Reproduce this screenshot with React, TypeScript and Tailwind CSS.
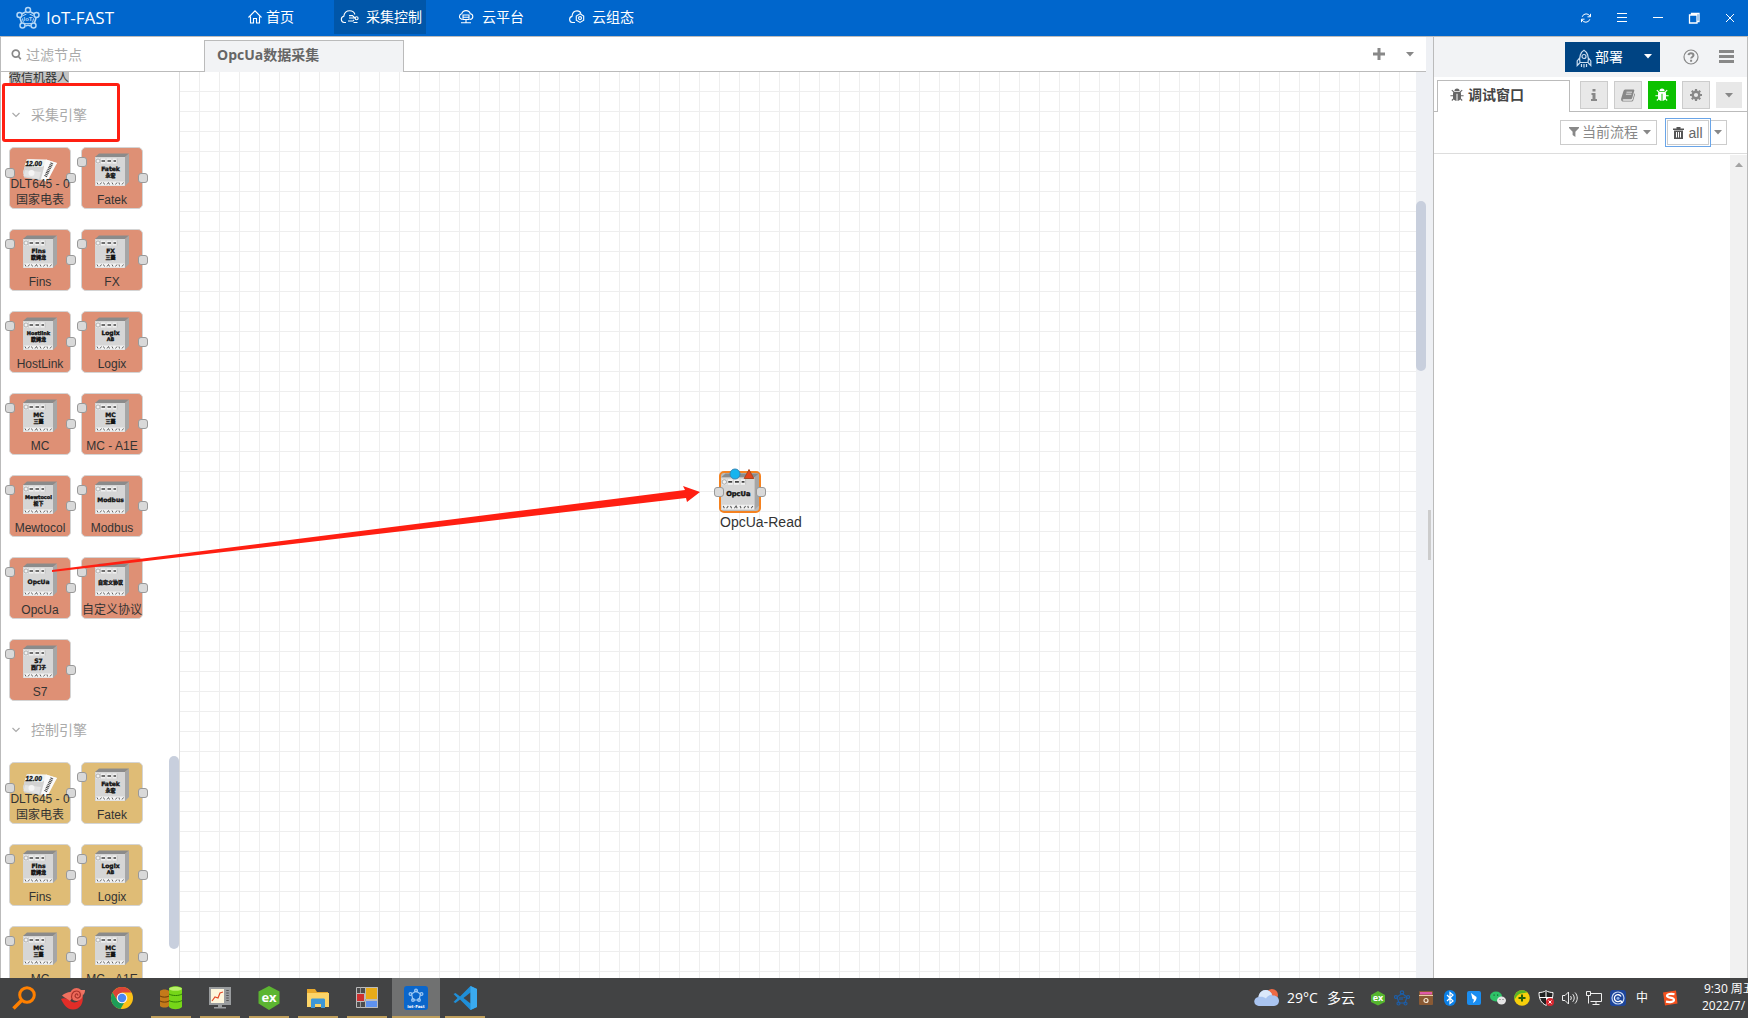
import React from 'react'

const FONT = "font-['Liberation_Sans','Noto_Sans_CJK_SC',sans-serif]"
const UI_FONT = "font-['Open_Sans','Noto_Sans_CJK_SC',sans-serif]"

type IconProps = { className?: string }

/* ---------- small glyphs ---------- */

function Caret({ className = '' }: IconProps) {
  return (
    <svg viewBox="0 0 8 5" className={`h-[5px] w-2 shrink-0 ${className}`} fill="currentColor" aria-hidden="true">
      <path d="M0 0h8L4 4.6z" />
    </svg>
  )
}

function Logo({ className = '' }: IconProps) {
  const knobs = [
    [12, 4],
    [20.5, 9],
    [17.5, 19.5],
    [6.5, 19.5],
    [3.5, 9],
  ]
  return (
    <svg viewBox="0 0 24 24" className={className} fill="none" stroke="currentColor" aria-hidden="true">
      <path strokeWidth="1.6" d="M9.6 6 5.8 7.8M14.4 6l3.8 1.8M20 12l-1.6 5M4 12l1.6 5M9.5 20c1.5-.9 3.5-.9 5 0" />
      <path strokeWidth="1" d="M10.4 8.2 7 9.6M13.6 8.2 17 9.6M17.6 12.4l-1 3.8M6.4 12.4l1 3.8M9 17.6h6" />
      {knobs.map(([x, y]) => (
        <circle key={`${x}-${y}`} cx={x} cy={y} r="2.5" strokeWidth="1.5" />
      ))}
      <text x="12" y="15" textAnchor="middle" fontSize="6" fontWeight="700" fill="currentColor" stroke="none" fontFamily="Liberation Sans">
        IoT
      </text>
    </svg>
  )
}

function HomeIcon() {
  return (
    <svg viewBox="0 0 14 16" className="h-4 w-[14px]" fill="none" stroke="currentColor" strokeWidth="1.1" aria-hidden="true">
      <path d="M.5 8.500 7 1.800l6.500 6.700M2.500 7.500v6.500h3V9.500h3V14h3V7.500" />
    </svg>
  )
}

function CloudFlowIcon() {
  return (
    <svg viewBox="0 0 20 16" className="h-4 w-5" fill="none" stroke="currentColor" strokeWidth="1.1" aria-hidden="true">
      <path d="M6 13.500H4.200a3.200 3.200 0 0 1-.4-6.300C4.300 4 6.800 1.800 9.700 1.800c2.600 0 4.500 1.500 5.200 3.700" />
      <path d="M9 6.600h3.500L15 9H9M8 12h5l1-1.200M13.500 13.500h4" />
      <circle cx="16.600" cy="9.300" r="1.500" />
    </svg>
  )
}

function CloudServerIcon() {
  return (
    <svg viewBox="0 0 18 16" className="h-4 w-[18px]" fill="none" stroke="currentColor" strokeWidth="1.1" aria-hidden="true">
      <path d="M4.500 10.500C2.600 10.300 1.300 9 1.500 7.300 1.600 5.800 2.500 5 3.700 4.800 4.300 2.800 6 1.600 8 1.600s3.800 1.200 4.300 3.200c1.500.2 2.500 1.200 2.500 2.700 0 1.600-1.200 2.900-3 3" />
      <path d="M5 6h6v4.500H5zM5 8.200h6M8 10.500v3M3 13.700h10" />
    </svg>
  )
}

function CloudGearIcon() {
  return (
    <svg viewBox="0 0 18 16" className="h-4 w-[18px]" fill="none" stroke="currentColor" strokeWidth="1.1" aria-hidden="true">
      <path d="M7 13.500H4.400a3.100 3.100 0 0 1-.4-6.100C4.300 4 6.500 1.900 9 1.900c2 0 3.400 1 4 2.700" />
      <path d="m12 4.800 3.700 2.200v4.200L12 13.400l-3.700-2.200V7z" />
      <circle cx="12" cy="9.100" r="1.500" />
    </svg>
  )
}

function BugIcon({ className = '' }: IconProps) {
  return (
    <svg viewBox="0 0 14 14" className={`h-[14px] w-[14px] shrink-0 ${className}`} fill="currentColor" aria-hidden="true">
      <path d="M4.400 3.200a2.600 2.600 0 0 1 5.200 0z" />
      <path d="M3.500 4h7c.4.6.5 1.300.5 2v3.500c0 1.700-1.400 3.300-3.500 3.500V5.800h-1V13C4.400 12.800 3 11.200 3 9.500V6c0-.7.1-1.400.5-2z" />
      <path d="M1.800 2.200 4.500 4.600M12.200 2.200 9.500 4.600M.4 7.700h3M10.600 7.700h3M1.800 12.500l2.400-2.300M12.200 12.500l-2.400-2.300" stroke="currentColor" strokeWidth="1.100" />
    </svg>
  )
}

function BookIcon() {
  return (
    <svg viewBox="0 0 14 14" className="h-[14px] w-[14px]" aria-hidden="true">
      <path fill="currentColor" d="M4.600 1.500h7.600c.9 0 1.300.7 1 1.500l-2 7c-.2.800-.9 1.300-1.700 1.300H2.600c-.8 0-1.200.5-1 1 .2.300.6.400 1 .4h7.600c.7 0 1.200-.4 1.400-1l1.900-6.500c.5.400.6.900.4 1.600l-1.700 5.600c-.2.700-.9 1.200-1.700 1.200H2.300C.8 13.600-.3 12 .2 10.500l2.200-7.300C2.700 2.200 3.600 1.500 4.600 1.500z" />
      <path stroke="#e8e8e8" strokeWidth=".9" d="M5.500 4.200h5.500M4.900 6.200h5.500" />
    </svg>
  )
}

function GearIcon() {
  return (
    <svg viewBox="0 0 14 14" className="h-[14px] w-[14px]" fill="none" stroke="currentColor" aria-hidden="true">
      <circle cx="7" cy="7" r="3.300" strokeWidth="2.400" />
      <path strokeWidth="2.200" d="M7 1v2M7 11v2M1 7h2M11 7h2M2.800 2.800l1.300 1.300M9.900 9.900l1.300 1.300M11.200 2.800 9.900 4.100M4.100 9.900l-1.300 1.300" />
    </svg>
  )
}

/* ---------- header ---------- */

const navItems = [
  { label: '首页', Icon: HomeIcon, cls: 'gap-1 pl-3 pr-1' },
  { label: '采集控制', Icon: CloudFlowIcon, cls: 'ml-9 gap-1.5 bg-[#0056a9] pl-1.5 pr-1' },
  { label: '云平台', Icon: CloudServerIcon, cls: 'ml-6 gap-1.5 pl-2 pr-1' },
  { label: '云组态', Icon: CloudGearIcon, cls: 'ml-8 gap-1.5 pl-2 pr-1' },
]

const windowIcons: { label: string; icon: React.ReactNode }[] = [
  { label: '刷新', icon: <path d="M2.200 4.800a4.200 4.200 0 0 1 7.900-.3M9.800 7.300a4.200 4.200 0 0 1-7.900.3M10.500 1.800v3h-3M1.500 10.200v-3h3" /> },
  { label: '菜单', icon: <path d="M1 1.500h10M1 5.500h10M1 9.500h10" /> },
  { label: '最小化', icon: <path d="M1 5.500h10" /> },
  { label: '还原', icon: <path d="M1.500 3h7.500v8H1.500zM3.500 3V1.500H11V9.500H9" strokeWidth="1.300" /> },
  { label: '关闭', icon: <path d="m2 2 8 8M10 2l-8 8" /> },
]

function Header() {
  return (
    <header className={`flex h-9 shrink-0 items-start bg-[#0066cc] text-white ${UI_FONT}`}>
      <div className="flex h-9 w-[236px] shrink-0 items-center gap-1.5 pl-4">
        <Logo className="h-6 w-6 text-[#b5d8f7]" />
        <span className="text-[17px] leading-6">IoT-FAST</span>
      </div>
      <nav className="flex h-[34px]">
        {navItems.map(({ label, Icon, cls }) => (
          <button key={label} className={`flex items-center whitespace-nowrap text-sm ${cls}`}>
            <Icon />
            {label}
          </button>
        ))}
      </nav>
      <div className="ml-auto flex h-9 items-center gap-6 pr-3">
        {windowIcons.map(({ label, icon }) => (
          <button key={label} aria-label={label}>
            <svg viewBox="0 0 12 12" className="h-3 w-3" fill="none" stroke="currentColor" aria-hidden="true">
              {icon}
            </svg>
          </button>
        ))}
      </div>
    </header>
  )
}

/* ---------- devices ---------- */

function DeviceBox({ lines, className = '' }: { lines: string[]; className?: string }) {
  return (
    <svg viewBox="0 0 68 68" className={className} aria-hidden="true">
      <path fill="#8b8b8b" d="m0 8 8-7h60l-8 7z" />
      <path fill="#a6a6a6" d="m60 8 8-7v57l-8 8z" />
      <path fill="#d6d6d6" d="M0 8h60v58H0z" />
      <path fill="#f2f2f2" d="M2 11h42v10H2zM2 57h57v8H2z" />
      <circle cx="6" cy="16" r="4" fill="none" stroke="#777" />
      <path stroke="#444" strokeWidth="3" d="M13 16h7M25 16h7M37 16h5" />
      <path stroke="#aaa" d="M11 11v10M22 11v10M34 11v10M44 11v10" />
      <path
        stroke="#555"
        strokeWidth="1.800"
        fill="none"
        d="m4 59 2 4M10 63l3-4M17 59l2 4M24 63l3-4 2 4M34 59l2 4M41 63l3-4M48 59l1 4M54 63l3-4"
      />
      <g fill="#111" stroke="#111" strokeWidth=".7" textAnchor="middle" fontWeight="700" fontFamily="DejaVu Sans, Noto Sans CJK SC, sans-serif">
        {lines.map((line, i) => (
          <text
            key={line}
            x="31"
            y={(lines.length === 1 ? 41 : 35) + i * 12}
            fontSize={i || line.charCodeAt(0) > 255 ? 10 : line.length > 6 ? 10 : 12}
          >
            {line}
          </text>
        ))}
      </g>
    </svg>
  )
}

function MeterBox({ className = '' }: IconProps) {
  return (
    <svg viewBox="0 0 68 68" className={className} aria-hidden="true">
      <path fill="#f3f3f3" d="M8 8 46 9l22 7-22 28H30L8 44l-8-8z" />
      <path fill="#d2d2d2" d="m0 34 8-26 34 14 4 22-8 7-36-6z" />
      <path fill="#fafafa" d="m46 9 22 7-20 38-12-6z" />
      <path fill="#e3e3e3" d="M36 34 4 30l-3 12 31 6z" />
      <circle cx="17" cy="36" r="6" fill="#f5f5f5" />
      <path fill="#eef2ee" d="m8 9 36 2-5 13-36-2z" />
      <text x="5" y="21" fontSize="13" fontWeight="700" fontStyle="italic" fill="#111" stroke="#111" strokeWidth=".6" fontFamily="Liberation Sans">
        12.00
      </text>
      <path stroke="#444" strokeWidth="6" strokeDasharray="2 1.500" d="m58 16-13 27" />
    </svg>
  )
}

type PaletteNode = { name: string; icon?: string[]; meter?: boolean }

const fatek: PaletteNode = { name: 'Fatek', icon: ['Fatek', '永宏'] }
const meter: PaletteNode = { name: 'DLT645 - 0 国家电表', meter: true }
const fins: PaletteNode = { name: 'Fins', icon: ['Fins', '欧姆龙'] }
const logix: PaletteNode = { name: 'Logix', icon: ['Logix', 'AB'] }
const mc: PaletteNode = { name: 'MC', icon: ['MC', '三菱'] }
const mcA1e: PaletteNode = { name: 'MC - A1E', icon: ['MC', '三菱'] }

const collectNodes: PaletteNode[] = [
  meter,
  fatek,
  fins,
  { name: 'FX', icon: ['FX', '三菱'] },
  { name: 'HostLink', icon: ['Hostlink', '欧姆龙'] },
  logix,
  mc,
  mcA1e,
  { name: 'Mewtocol', icon: ['Mewtocol', '松下'] },
  { name: 'Modbus', icon: ['Modbus'] },
  { name: 'OpcUa', icon: ['OpcUa'] },
  { name: '自定义协议', icon: ['自定义协议'] },
  { name: 'S7', icon: ['S7', '西门子'] },
]
const controlNodes: PaletteNode[] = [meter, fatek, fins, logix, mc, mcA1e]

function Port({ className }: { className: string }) {
  return <span className={`absolute h-[10px] w-[10px] rounded-[3px] border border-[#999] bg-[#d9d9d9] ${className}`} />
}

function PaletteItem({ node, color }: { node: PaletteNode; color: string }) {
  return (
    <div className={`relative flex h-[62px] w-[62px] flex-col items-center justify-end rounded-[5px] border border-[#d4d4d4] ${color}`}>
      {node.meter ? (
        <MeterBox className="absolute left-[13px] top-[7px] h-[34px] w-[34px]" />
      ) : (
        <DeviceBox lines={node.icon ?? []} className="absolute left-[13px] top-[5px] h-[34px] w-[34px]" />
      )}
      <Port className={node.meter ? '-left-[5px] top-5' : '-left-[5px] top-[9px]'} />
      <Port className="-right-[6px] top-[25px]" />
      <span className={`relative text-center text-xs leading-4 text-[#333] ${node.meter ? '' : 'whitespace-nowrap'}`}>{node.name}</span>
    </div>
  )
}

function PaletteGroup({ title, nodes, color }: { title: string; nodes: PaletteNode[]; color: string }) {
  return (
    <section>
      <button className="flex h-[61px] items-center gap-[11px] pb-1 pl-[11px] text-sm text-[#aaa]">
        <svg viewBox="0 0 8 6" className="h-1.5 w-2" fill="none" stroke="currentColor" strokeWidth="1.200" aria-hidden="true">
          <path d="m.5 1 3.500 3.500L7.500 1" />
        </svg>
        {title}
      </button>
      <div className="grid w-max grid-cols-2 gap-x-[10px] gap-y-5 pl-2">
        {nodes.map((node) => (
          <PaletteItem key={node.name} node={node} color={color} />
        ))}
      </div>
    </section>
  )
}

function Palette() {
  return (
    <aside className="flex w-[180px] shrink-0 flex-col border-l border-[#bbb]">
      <label className="flex h-[35px] shrink-0 items-center gap-1 border-b border-[#bbb] pl-[10px]">
        <svg viewBox="0 0 11 11" className="h-[11px] w-[11px]" fill="none" stroke="#888" strokeWidth="1.700" aria-hidden="true">
          <circle cx="4.800" cy="4.600" r="3.500" />
          <path d="m7.300 7.300 2.500 3" />
        </svg>
        <input aria-label="过滤节点" placeholder="过滤节点" className="w-32 pt-px text-sm text-[#555] outline-none placeholder:text-[#aaa]" />
      </label>
      <div className="relative min-h-0 flex-1 overflow-hidden border-r border-[#ddd]">
        <div className="mb-0.5 flex h-3 items-end pl-2 text-xs">
          <span className="bg-[#c4c4c4] leading-3 text-[#333]">微信机器人</span>
        </div>
        <PaletteGroup title="采集引擎" nodes={collectNodes} color="bg-[#de9075]" />
        <PaletteGroup title="控制引擎" nodes={controlNodes} color="bg-[#dfbc76]" />
        <div className="absolute bottom-[29px] right-0 h-[193px] w-[10px] rounded-full bg-[#c8cfdd]" />
      </div>
    </aside>
  )
}

/* ---------- workspace ---------- */

function Workspace() {
  return (
    <main className="flex min-w-0 flex-1 flex-col">
      <div className="flex h-[35px] shrink-0 items-stretch">
        <div className="w-6 border-b border-[#bbb]" />
        <button className={`mt-[3px] w-[200px] border-x border-t border-[#bbb] bg-[#f2f3f5] px-3 pb-1 text-left text-sm font-bold text-[#666] ${UI_FONT}`}>
          OpcUa数据采集
        </button>
        <div className="flex flex-1 items-center justify-end gap-[21px] border-b border-[#bbb] pr-3 text-[#888]">
          <button aria-label="添加流程">
            <svg viewBox="0 0 12 12" className="h-3 w-3" fill="currentColor" aria-hidden="true">
              <path d="M4.500 0h3v4.500H12v3H7.500V12h-3V7.500H0v-3h4.500z" />
            </svg>
          </button>
          <button aria-label="流程列表">
            <Caret />
          </button>
        </div>
      </div>
      <div className="flex min-h-0 flex-1">
        <div className="relative min-w-0 flex-1 overflow-hidden bg-white bg-[linear-gradient(to_right,#eee_1px,transparent_1px),linear-gradient(to_bottom,#eee_1px,transparent_1px)] bg-[length:20px_20px] bg-[position:19px_19px]">
          <div className="absolute left-[539px] top-[399px] h-[42px] w-[42px] rounded-[5px] border-2 border-[#f58220] bg-[#bbb]">
            <DeviceBox lines={['OpcUa']} className="h-[38px] w-[38px]" />
            <Port className="-left-[7px] top-[14px]" />
            <Port className="-right-[7px] top-[14px]" />
            <svg viewBox="0 0 30 12" className="absolute -top-[5px] left-2 h-3 w-[30px] overflow-visible" aria-hidden="true">
              <circle cx="6" cy="6" r="5" fill="#16b4ef" stroke="#3588b8" />
              <path d="m20 1.500 4.800 9h-9.600z" fill="#e5441c" stroke="#a8481f" />
            </svg>
          </div>
          <span className="absolute left-[540px] top-[440px] text-sm text-[#333]">OpcUa-Read</span>
        </div>
        <div className="w-[10px] shrink-0 bg-[#eef0f4] pt-[129px]">
          <div className="h-[170px] rounded-full bg-[#c8cfdd]" />
        </div>
      </div>
    </main>
  )
}

/* ---------- sidebar ---------- */

function SidebarTabButton({ label, active, children }: { label: string; active?: boolean; children: React.ReactNode }) {
  return (
    <button
      aria-label={label}
      className={`flex h-7 w-7 items-center justify-center border ${active ? 'border-[#0cc100] bg-[#0cc100] text-white' : 'border-[#ccc] bg-[#e8e8e8] text-[#888]'}`}
    >
      {children}
    </button>
  )
}

function Sidebar() {
  return (
    <aside className="flex w-[315px] shrink-0 flex-col border-x border-[#bbb] bg-white">
      <div className="flex h-10 items-center bg-[#f2f3f5] pb-px pr-[13px] text-[#888]">
        <button className="ml-auto flex h-[30px] w-[95px] items-center bg-[#004483] pl-[11px] pr-2 text-sm text-white">
          <svg viewBox="0 0 16 19" className="mt-1 h-[19px] w-4" fill="none" stroke="#c9dcef" strokeWidth="1.200" aria-hidden="true">
            <path d="M4 13.500C2.900 8 4.600 3 8 1.200c3.400 1.800 5.100 6.800 4 12.300zM3.500 9 1.200 12v4.500l2.500-2.500M12.500 9l2.300 3v4.500L12.300 14M5.500 15v3M8 15v3.500M10.500 15v3" />
            <circle cx="8" cy="7.500" r="2" />
          </svg>
          <span className="ml-[3px] mr-auto">部署</span>
          <Caret />
        </button>
        <button aria-label="帮助" className="ml-[23px]">
          <svg viewBox="0 0 16 16" className="h-4 w-4" fill="none" stroke="currentColor" aria-hidden="true">
            <circle cx="8" cy="8" r="7" strokeWidth="1.200" />
            <path strokeWidth="2" d="M5.500 6.200c.2-1.300 1.200-2 2.500-2s2.500.8 2.500 2.100c0 1.600-2.400 1.700-2.400 3.200M8.100 10.800v1.900" />
          </svg>
        </button>
        <button aria-label="主菜单" className="ml-5 flex w-[15px] flex-col gap-0.5">
          <span className="h-[3px] bg-current" />
          <span className="h-[3px] bg-current" />
          <span className="h-[3px] bg-current" />
        </button>
      </div>
      <div className="flex h-[35px] items-stretch pt-[3px]">
        <div className="w-[3px] border-b border-[#bbb]" />
        <button className="flex w-[133px] items-center gap-1 border-x border-t border-[#bbb] pb-[3px] pl-3 text-sm font-bold text-[#444]">
          <BugIcon className="text-[#666]" />
          调试窗口
        </button>
        <div className="flex flex-1 items-start justify-end gap-1.5 border-b border-[#bbb] pr-[5px] pt-px">
          <SidebarTabButton label="信息">
            <svg viewBox="0 0 6 12" className="h-3 w-1.5" fill="currentColor" aria-hidden="true">
              <path d="M1.500 0h3v2.500h-3zM.5 4h4v6H6v2H0v-2h1.500V6h-1z" />
            </svg>
          </SidebarTabButton>
          <SidebarTabButton label="帮助文档">
            <BookIcon />
          </SidebarTabButton>
          <SidebarTabButton label="调试" active>
            <BugIcon />
          </SidebarTabButton>
          <SidebarTabButton label="配置">
            <GearIcon />
          </SidebarTabButton>
          <button aria-label="更多" className="mt-px flex h-[26px] w-[26px] items-center justify-center bg-[#e8e8e8] text-[#888]">
            <Caret />
          </button>
        </div>
      </div>
      <div className="flex h-[42px] items-center justify-end border-b border-[#ddd] pr-5 text-sm text-[#888]">
        <button className="mr-2 flex h-[25px] w-[97px] items-center border border-[#ccc] pl-2 pr-[5px] pb-px">
          <svg viewBox="0 0 10 10" className="h-[10px] w-[10px]" fill="currentColor" aria-hidden="true">
            <path d="M0 0h10v1L6.400 4.800V10L3.600 8V4.800L0 1z" />
          </svg>
          <span className="ml-[3px] mr-auto">当前流程</span>
          <Caret />
        </button>
        <button className="flex h-[29px] w-[46px] items-center justify-center border border-[#6aa5e8] p-px text-sm text-[#666]">
          <span className="flex h-[25px] w-full items-center justify-center gap-1 border border-[#ccc]">
            <svg viewBox="0 0 11 12" className="h-3 w-[11px]" aria-hidden="true">
              <path fill="#555" d="M3.500 0h4v1.500H11V3H0V1.500h3.500zM1 3.500h9V12H1z" />
              <path stroke="#fff" d="M3.500 5v5.500M5.500 5v5.500M7.500 5v5.500" />
            </svg>
            all
          </span>
        </button>
        <button aria-label="清空选项" className="flex h-[25px] w-4 items-center justify-center border border-l-0 border-[#ccc] pr-0.5">
          <Caret />
        </button>
      </div>
      <div className="flex min-h-0 flex-1 justify-end pt-px">
        <div className="flex w-[17px] justify-center bg-[#f1f1f1] pt-[7px]">
          <Caret className="rotate-180 text-[#a3a3a3]" />
        </div>
      </div>
    </aside>
  )
}

/* ---------- taskbar ---------- */

const hexagon = 'M12 0 22.500 5.500v12L12 24 1.500 17.500v-12z'

const taskApps: { name: string; state: 'idle' | 'open' | 'active'; art: React.ReactNode }[] = [
  {
    name: '搜索',
    state: 'idle',
    art: (
      <g fill="none" stroke="#ff8000" strokeWidth="3">
        <circle cx="15" cy="9" r="7.300" />
        <path strokeWidth="3.500" d="m9.500 14.500-8 8" />
      </g>
    ),
  },
  {
    name: 'Nautilus',
    state: 'idle',
    art: (
      <g>
        <path fill="#e22d28" d="M0 13c3-2 8 0 11 3 4 1.500 8-1 10.500-6C23 17 19 23.500 12 23.500 6 23.500 3 19 0 13z" />
        <path fill="#f0705f" d="M1 9.500C4 7 8 5.500 10 6l1 6-2 3c-2-2-5-3-8-5.500z" />
        <circle cx="15.500" cy="8.500" r="6.500" fill="#ee6a5a" />
        <path fill="none" stroke="#a8322b" strokeWidth="1.200" d="M11.500 14c-2.500-4 0-9 4-9s5 5 2.500 6.500-4.800-.8-3.600-2.800 3-.2 2.200 1" />
        <path fill="#ef7565" d="M19 4h5c0 3-1 4-2 5z" />
      </g>
    ),
  },
  {
    name: 'Chrome',
    state: 'idle',
    art: (
      <g>
        <circle cx="12" cy="12" r="11" fill="#fbc116" />
        <path fill="#dc4437" d="M2.500 6.500A11 11 0 0 1 21.500 6.500H12L7.500 14.500z" />
        <path fill="#1d9e58" d="M2.500 6.500 8 15.500l6 1.500-3.500 6A11 11 0 0 1 2.500 6.500z" />
        <circle cx="12" cy="12" r="5.300" fill="#f5f5f5" />
        <circle cx="12" cy="12" r="4.200" fill="#4a87f2" />
      </g>
    ),
  },
  {
    name: 'Database',
    state: 'open',
    art: (
      <g>
        <path fill="#c47a1a" d="M1 5c2-2 7-2 9 0v15c-2 2-7 2-9 0z" />
        <path stroke="#6a3b08" fill="none" d="M1 10c2 1.500 7 1.500 9 0M1 15c2 1.500 7 1.500 9 0" />
        <path fill="#76d618" d="M10 2c3-2.500 10-2.500 13 0v19c-3 3-10 3-13 0z" />
        <ellipse cx="16.500" cy="2.800" rx="6.500" ry="2" fill="#b8f06a" />
        <path stroke="#2f8204" fill="none" d="M10 8c3 2 10 2 13 0M10 14.500c3 2 10 2 13 0" />
      </g>
    ),
  },
  {
    name: 'Monitor',
    state: 'open',
    art: (
      <g>
        <path fill="#999c9e" d="M1 1h22v18H1zM10 19h4v3h-4zM6 21h12v1.500H6z" />
        <path fill="#fdf6dc" d="M3 3h13v14H3z" />
        <path fill="none" stroke="#e24a2a" strokeWidth="1.200" d="m4 15 3-4 3 1 2-5 3-1" />
        <path stroke="#555" strokeDasharray="1 1.500" d="M19.500 4v12" strokeWidth="2.500" />
      </g>
    ),
  },
  {
    name: 'EX',
    state: 'open',
    art: (
      <g>
        <path fill="#5cb531" d={hexagon} />
        <text x="12" y="16" textAnchor="middle" fontSize="13" fontWeight="700" fill="#fff" fontFamily="Open Sans">
          ex
        </text>
      </g>
    ),
  },
  {
    name: '文件资源管理器',
    state: 'open',
    art: (
      <g>
        <path fill="#e8a92c" d="M1 3h8l2 3h11v5H1z" />
        <path fill="#fcd468" d="M1 7h22v14H1z" />
        <path fill="#3d97d8" d="M5 14c0-1 .5-1.500 1.500-1.500h11c1 0 1.500.5 1.500 1.500v8h-4v-4H9v4H5z" />
      </g>
    ),
  },
  {
    name: 'Blocks',
    state: 'open',
    art: (
      <g stroke="#bbb">
        <path fill="#4c4c4c" d="M1.500 1.500h21v20h-21z" />
        <path d="M5.500 1.500v20" stroke="#999" />
        <path fill="#cf2f2f" d="M1.500 7.500h8v8h-8z" />
        <path fill="#e8ab18" d="M10.500 1.500h12v12h-12z" />
        <path fill="#5f92ef" d="M10.500 14.500h12v7h-12z" />
      </g>
    ),
  },
  {
    name: 'IoT-Fast',
    state: 'active',
    art: (
      <g>
        <rect x="0" y="0" width="24" height="24" rx="3" fill="#0a66cb" />
        <g fill="none" stroke="#9cc8f5" strokeWidth="1.200">
          <path d="m12 5 4.500 3-1.500 6H9L7.500 8z" />
          <circle cx="12" cy="4.500" r="1.400" />
          <circle cx="17.500" cy="8" r="1.400" />
          <circle cx="6.500" cy="8" r="1.400" />
          <circle cx="9" cy="14" r="1.400" />
          <circle cx="15" cy="14" r="1.400" />
        </g>
        <text x="12" y="21.500" textAnchor="middle" fontSize="4" fontWeight="700" fill="#fff" fontFamily="DejaVu Sans">
          Iot-Fast
        </text>
      </g>
    ),
  },
  {
    name: 'Visual Studio Code',
    state: 'open',
    art: (
      <g>
        <path fill="#1f8fd8" d="M17.500 0 24 3v18l-6.500 3L7 13.500 2.500 17 .5 16l4-4-4-4 2-1L7 10.500z" />
        <path fill="#424345" d="M17.500 6.500v11L10.500 12z" />
        <path fill="#3aaaf0" d="M17.500 0 24 3v18l-6.500 3z" />
      </g>
    ),
  },
]

const trayIcons: { name: string; art: React.ReactNode }[] = [
  {
    name: 'EX',
    art: (
      <g>
        <path fill="#55b52f" d="m8 1 7 4v7l-7 3.500L1 12V5z" />
        <text x="8" y="11" textAnchor="middle" fontSize="9" fontWeight="700" fill="#fff" fontFamily="Open Sans">
          ex
        </text>
      </g>
    ),
  },
  {
    name: 'IoT-Fast',
    art: (
      <g fill="none" stroke="#1d5ea8" strokeWidth="1.200">
        <path d="M8 3.500 13 7l-2 6H5L3 7z" />
        <circle cx="8" cy="2.500" r="1.700" />
        <circle cx="14" cy="7" r="1.500" />
        <circle cx="2" cy="7" r="1.500" />
        <circle cx="4.500" cy="13.500" r="1.500" />
        <circle cx="11.500" cy="13.500" r="1.500" />
        <path d="M6 7v3M8 7v3M9.500 7.300h2" />
      </g>
    ),
  },
  {
    name: 'Box',
    art: (
      <g>
        <rect x="1" y="1" width="14" height="14" rx="1" fill="#8a5a34" />
        <path fill="#e05aa8" d="M2 2h12v2.500H2z" />
        <path fill="#e8cfa8" d="M1 5h14v1H1z" />
        <circle cx="8" cy="10.500" r="2" fill="none" stroke="#f5ead8" strokeWidth="1.200" />
      </g>
    ),
  },
  {
    name: '蓝牙',
    art: (
      <g>
        <rect x="2" y="0" width="12" height="16" rx="6" fill="#0a80e8" />
        <path fill="none" stroke="#fff" strokeWidth="1.200" d="m5 5 6 6-3 2.500v-11L11 5l-6 6" />
      </g>
    ),
  },
  {
    name: 'Messenger',
    art: (
      <g>
        <rect x="1" y="1" width="14" height="14" rx="2" fill="#1a8df0" />
        <path fill="#fff" d="m5 3 5.500 4c.5 2-1 4.500-3.500 6l1-3.500L6.500 9z" />
      </g>
    ),
  },
  {
    name: '微信',
    art: (
      <g>
        <ellipse cx="6" cy="6.500" rx="6" ry="5" fill="#2fc268" />
        <ellipse cx="11.500" cy="10.500" rx="4.500" ry="4" fill="#e5e5e5" />
        <path fill="#175f34" d="M3.500 4.500h1.200v1.200H3.500zM7 4.500h1.200v1.200H7z" />
        <path fill="#666" d="M9.500 9h1v1h-1zM12.500 9h1v1h-1z" />
      </g>
    ),
  },
  {
    name: '360',
    art: (
      <g>
        <circle cx="8" cy="8" r="7.800" fill="#f7cf0c" />
        <path fill="#58b526" d="M8 .2A7.800 7.800 0 0 0 .5 10C3 5 5 3.500 8 3.200s5-.7 5.500-.9A7.800 7.800 0 0 0 8 .2z" />
        <path stroke="#27600c" strokeWidth="2" d="M8 4.500v7M4.500 8h7" />
      </g>
    ),
  },
  {
    name: '安全中心',
    art: (
      <g>
        <path fill="#222" stroke="#fff" d="M8 .7C6 2 3.500 2.500 1 2.500 1 9 3 13 8 15.300 13 13 15 9 15 2.500 12.500 2.500 10 2 8 .7z" />
        <path fill="#fff" d="M8 7.500h6c-1 3.500-3 6-6 7zM7.500 7.500v-6h1v6zM1.500 7h13v1h-13z" />
        <circle cx="12" cy="12" r="4" fill="#d8262f" />
        <path stroke="#fff" d="m10.500 10.500 3 3M13.500 10.500l-3 3" />
      </g>
    ),
  },
  {
    name: '音量',
    art: (
      <g fill="none" stroke="#eee">
        <path d="M.5 5.500h2.500L6.500 2v12L3 10.500H.5zM8.500 6c1 1.200 1 2.800 0 4M10.700 4.200c2 2.200 2 5.400 0 7.600M13 2.500c3 3.200 3 7.800 0 11" />
      </g>
    ),
  },
  {
    name: '网络',
    art: (
      <g fill="none" stroke="#eee">
        <path d="M4.500 3.500h11v8h-11M10 11.500v3M6.500 14.500h7M.5 1.500h4v4h-4zM2.500 5.500v8" />
      </g>
    ),
  },
  {
    name: 'Client',
    art: (
      <g>
        <rect x="0" y="0" width="16" height="16" rx="3" fill="#1d459a" />
        <circle cx="8" cy="8" r="6" fill="none" stroke="#c5d7f3" strokeWidth="1.200" />
        <path fill="none" stroke="#fff" strokeWidth="1.300" d="M10.500 10.500A3.500 3.500 0 1 1 11 6.500M10.500 10.500l2 2.500" />
        <circle cx="8" cy="8.300" r="1.500" fill="#8fb2ea" />
      </g>
    ),
  },
]

function Taskbar() {
  return (
    <footer className={`flex h-10 shrink-0 items-center overflow-hidden bg-[#424344] text-white ${UI_FONT}`}>
      <div className="flex h-full gap-px">
        {taskApps.map(({ name, state, art }) => (
          <button
            key={name}
            aria-label={name}
            className={`relative flex w-12 items-center justify-center ${state === 'active' ? 'bg-[#707171]' : ''}`}
          >
            <svg viewBox="0 0 24 24" className="h-6 w-6" aria-hidden="true">
              {art}
            </svg>
            {state !== 'idle' && (
              <span className={`absolute bottom-0 h-0.5 bg-[#bf9f5c] ${state === 'active' ? 'inset-x-0' : 'inset-x-1'}`} />
            )}
          </button>
        ))}
      </div>
      <div className="ml-auto flex items-center">
        <svg viewBox="0 0 26 18" className="h-[18px] w-[26px]" aria-hidden="true">
          <circle cx="18" cy="6" r="6" fill="#ee6a45" />
          <path fill="#a9c4f0" d="M5 17a4.500 4.500 0 0 1-.5-9C5 4 8 1 11.500 1c3.500 0 6 2.300 7 5.500 3.500-.5 6.500 2 6.500 5.300 0 3-2 5.200-5 5.200z" />
          <path fill="#dbe8fb" d="M4.500 8C5 4 8 1 11.500 1c3 0 5.300 1.800 6.500 4.500-3 .5-5 2-6 4-2-1.800-5-2.300-7.500-1.500z" />
        </svg>
        <span className="ml-[7px] w-10 whitespace-nowrap text-sm">29°C</span>
        <span className="w-[43px] whitespace-nowrap text-sm">多云</span>
        <div className="flex items-center gap-2">
          {trayIcons.map(({ name, art }) => (
            <button key={name} aria-label={name}>
              <svg viewBox="0 0 16 16" className="h-4 w-4" aria-hidden="true">
                {art}
              </svg>
            </button>
          ))}
          <button className="w-4 text-xs">中</button>
        </div>
        <button aria-label="搜狗输入法" className="ml-3">
          <svg viewBox="0 0 16 16" className="h-4 w-4" aria-hidden="true">
            <path fill="#f4511e" d="M1 2.500 14 .5l1.500 13L3 15.500z" />
            <path fill="none" stroke="#fff" strokeWidth="2.200" d="M12.500 4.200C9 3.300 5 4 5 6s7 1.300 7 3.700-4 2.800-8 2" />
          </svg>
        </button>
        <div className="ml-6 w-[46px] overflow-hidden whitespace-nowrap pb-0.5 text-xs leading-[17px]">
          <div className="pl-0.5">9:30 周五</div>
          <div>2022/7/</div>
        </div>
      </div>
    </footer>
  )
}

/* ---------- annotations drawn over the editor ---------- */

function Annotations() {
  return (
    <>
      <div className="pointer-events-none absolute left-0.5 top-[83px] h-[59px] w-[118px] rounded-[3px] border-[3px] border-[#ff1f12]" />
      <svg viewBox="0 0 700 600" className="pointer-events-none absolute left-0 top-0 h-[600px] w-[700px]" aria-hidden="true">
        <path fill="#ff1f12" d="m52 570 633-80-2-4 17 6-13 10-1-4-634 74z" />
      </svg>
    </>
  )
}

export default function App() {
  return (
    <div className={`relative flex h-screen flex-col overflow-hidden bg-white ${FONT}`}>
      <Header />
      <div className="flex min-h-0 flex-1 border-t border-[#bbb]">
        <Palette />
        <Workspace />
        <div className="flex w-[7px] shrink-0 items-center justify-end bg-[#eef0f4] pr-0.5 pt-[54px]">
          <div className="h-[50px] w-[3px] bg-[#ccc]" />
        </div>
        <Sidebar />
      </div>
      <Taskbar />
      <Annotations />
    </div>
  )
}
